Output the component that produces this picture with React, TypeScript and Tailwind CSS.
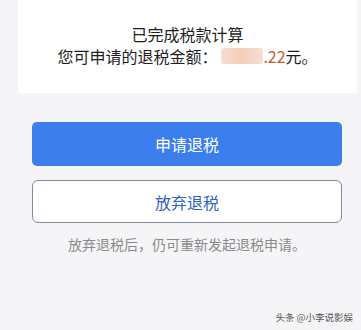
import React from "react";

export default function App() {
  const font = { fontFamily: '"Noto Sans CJK SC", "Noto Sans", sans-serif' };
  return (
    <div className="w-[361px] h-[330px] bg-[#f5f5f8] flex flex-col overflow-hidden relative" style={font}>
      <div className="mx-[18px] mr-[4px] h-[93px] bg-white flex flex-col items-center pt-[23px]">
        <div className="text-[16px] leading-[22px] text-[#1e1e1e]">已完成税款计算</div>
        <div className="text-[16px] leading-[22px] text-[#1e1e1e] flex items-center">
          <span>您可申请的退税金额：</span>
          <span className="ml-[4px] inline-block w-[42px] h-[16px] rounded-[3px] bg-gradient-to-r from-[#f7dfd2] via-[#f3cdb9] to-[#f7e0d3]" />
          <span className="text-[#c8582e]">.22</span>
          <span>元。</span>
        </div>
      </div>
      <div className="px-[32px] pr-[19px] mt-[29px] flex flex-col">
        <button className="h-[44px] w-full rounded-[5px] bg-[#3c7eec] text-white text-[16px]">申请退税</button>
        <button className="mt-[14px] h-[43px] w-full rounded-[6px] bg-white border border-[#7f8b9c] text-[#2f63b6] text-[16px]">放弃退税</button>
        <div className="mt-[11px] text-center text-[14px] leading-[20px] text-[#8a8a8a]">放弃退税后，仍可重新发起退税申请。</div>
      </div>
      <div className="absolute right-[8px] bottom-[7px] text-[9.5px] leading-[12px] text-[#555]">头条 @小李说影娱</div>
    </div>
  );
}
